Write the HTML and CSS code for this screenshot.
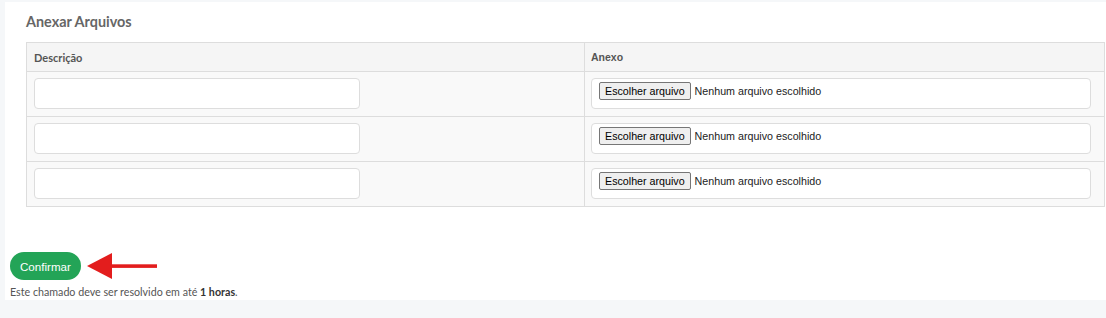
FILE: index.html
```html
<!DOCTYPE html>
<html lang="pt-BR">
<head>
    <meta charset="UTF-8">
    <meta name="viewport" content="width=device-width, initial-scale=1.0">
    <title>Anexar Arquivos</title>
    <link rel="stylesheet" href="styles.css">
</head>
<body>

    <div class="panel">
        <div class="anexos">
            <h4 class="titulo">Anexar Arquivos</h4>
            <table class="tabela">
                <thead>
                    <tr>
                        <th class="colDesc">Descrição</th>
                        <th class="colAnexo">Anexo</th>
                    </tr>
                </thead>
                <tbody>
                    <tr>
                        <td class="celDesc"><input class="campo" type="text"></td>
                        <td class="celAnexo">
                            <div class="arquivo"><span class="arqBtn">Escolher arquivo</span><span class="arqNome">Nenhum arquivo escolhido</span></div>
                        </td>
                    </tr>
                    <tr>
                        <td class="celDesc"><input class="campo" type="text"></td>
                        <td class="celAnexo">
                            <div class="arquivo"><span class="arqBtn">Escolher arquivo</span><span class="arqNome">Nenhum arquivo escolhido</span></div>
                        </td>
                    </tr>
                    <tr>
                        <td class="celDesc"><input class="campo" type="text"></td>
                        <td class="celAnexo">
                            <div class="arquivo"><span class="arqBtn">Escolher arquivo</span><span class="arqNome">Nenhum arquivo escolhido</span></div>
                        </td>
                    </tr>
                </tbody>
            </table>
        </div>

        <div class="acoes">
            <button class="btnConfirmar" type="button">Confirmar</button>
            <svg class="seta" width="70" height="26" viewBox="0 0 70 26">
                <polygon points="0,13 25,0 25,26" fill="#e31d1d"/>
                <rect x="24" y="11.3" width="46" height="3.6" fill="#e31d1d"/>
            </svg>
        </div>
        <p class="prazo">Este chamado deve ser resolvido em até <b>1 horas</b>.</p>
    </div>

</body>
</html>
```

FILE: styles.css
```css
*{
    padding: 0;
    margin: 0;
    box-sizing: border-box;
}
body{
    background: #f5f7f9;
    font-family: Lato, "Liberation Sans", sans-serif;
    color: #555;
}
.panel{
    margin: 2px 0 0 5px;
    padding: 10px 0 0 0;
    background: #fff;
}
.anexos{
    padding-left: 21px;
}
.titulo{
    font-size: 14.4px;
    line-height: 20px;
    font-weight: 700;
    color: #666;
    margin-bottom: 10px;
}
.tabela{
    width: calc(100% - 1px);
    border-collapse: collapse;
    table-layout: fixed;
}
.tabela th{
    height: 29px;
    padding: 0 7px;
    text-align: left;
    font-size: 11px;
    font-weight: 700;
    background: #f5f5f5;
    border: 1px solid #ddd;
    color: #555;
}
.tabela .colDesc{
    width: 558px;
}
.tabela .colAnexo{
    padding-left: 6px;
    font-family: "Liberation Sans", Arial, sans-serif;
    font-size: 10.5px;
}
.tabela td{
    background: #f9f9f9;
    border: 1px solid #ddd;
    padding: 6px 7px 7px;
    vertical-align: top;
}
.tabela .celAnexo{
    padding: 6px 13px 7px 6px;
}
.campo{
    display: block;
    width: 326px;
    height: 31px;
    border: 1px solid #ddd;
    border-radius: 4px;
    background: #fff;
    outline: none;
}
.arquivo{
    display: flex;
    align-items: center;
    height: 31px;
    padding: 0 7px 5px;
    border: 1px solid #ddd;
    border-radius: 4px;
    background: #fff;
    font-family: "Liberation Sans", Arial, sans-serif;
    font-size: 10.7px;
    color: #222;
}
.arqBtn{
    display: flex;
    align-items: center;
    height: 18px;
    padding: 0 5px;
    margin-right: 4px;
    border: 1px solid #767676;
    border-radius: 2px;
    background: #efefef;
    color: #000;
}
.acoes{
    display: flex;
    align-items: center;
    gap: 6px;
    margin-top: 45px;
    padding-left: 5px;
}
.btnConfirmar{
    height: 28px;
    padding: 0 10px;
    border: none;
    border-radius: 14px;
    background: #23a457;
    color: #fff;
    font-family: "Liberation Sans", Arial, sans-serif;
    font-size: 11.6px;
}
.seta{
    display: block;
}
.prazo{
    padding-left: 5px;
    margin-top: 4px;
    font-size: 10.7px;
    line-height: 16px;
    color: #555;
}
.prazo b{
    color: #333;
}
```
